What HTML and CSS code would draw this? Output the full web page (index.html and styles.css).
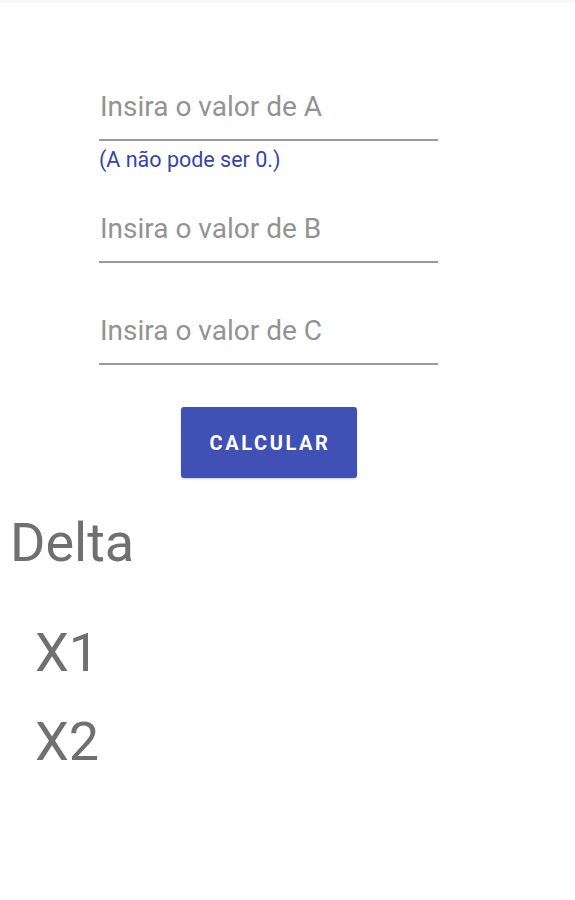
FILE: index.html
```html
<!DOCTYPE html>
<html lang="pt">
<head>
<meta charset="utf-8">
<title>Calculadora</title>
<link rel="stylesheet" href="styles.css">
</head>
<body>
<div class="statusbar"></div>
<main class="page">
  <form class="form">
    <div class="field field-a">
      <div class="placeholder">Insira o valor de A</div>
    </div>
    <div class="helper">(A não pode ser 0.)</div>
    <div class="field field-b">
      <div class="placeholder">Insira o valor de B</div>
    </div>
    <div class="field field-c">
      <div class="placeholder">Insira o valor de C</div>
    </div>
    <div class="actions">
      <button type="button" class="btn">CALCULAR</button>
    </div>
  </form>
  <div class="results">
    <div class="delta">Delta</div>
    <div class="root root-1">X1</div>
    <div class="root root-2">X2</div>
  </div>
</main>
</body>
</html>
```

FILE: styles.css
```css
html, body {
  margin: 0;
  padding: 0;
  background: #ffffff;
  font-family: Roboto, "Liberation Sans", sans-serif;
}
.statusbar {
  height: 3px;
  background: #f7f7f7;
}
.page {
  display: flex;
  flex-direction: column;
}
.form {
  width: 339px;
  margin-left: 99px;
  display: flex;
  flex-direction: column;
}
.field {
  border-bottom: 2px solid #9b9b9b;
  padding-bottom: 16px;
}
.placeholder {
  font-size: 28px;
  line-height: 33px;
  color: #939393;
  padding-left: 1px;
}
.field-a { margin-top: 87px; }
.helper {
  margin-top: 6px;
  font-size: 21.5px;
  line-height: 25px;
  color: #3646a8;
}
.field-b { margin-top: 40px; }
.field-c { margin-top: 51px; }
.actions {
  display: flex;
  justify-content: center;
  margin-top: 42px;
}
.btn {
  width: 176px;
  height: 71px;
  border: none;
  border-radius: 3px;
  background: #3f51b5;
  color: #ffffff;
  font-family: Roboto, "Liberation Sans", sans-serif;
  font-weight: 700;
  font-size: 20px;
  letter-spacing: 2.6px;
  box-shadow: 0 1px 2px rgba(0,0,0,0.2);
  padding: 0 0 0 3px;
}
.results {
  display: flex;
  flex-direction: column;
  color: #707070;
}
.delta {
  margin-top: 33px;
  margin-left: 10px;
  font-size: 54px;
  line-height: 64px;
}
.root {
  margin-left: 35px;
  font-size: 54px;
  line-height: 64px;
}
.root-1 { margin-top: 46px; }
.root-2 { margin-top: 25px; }
```
